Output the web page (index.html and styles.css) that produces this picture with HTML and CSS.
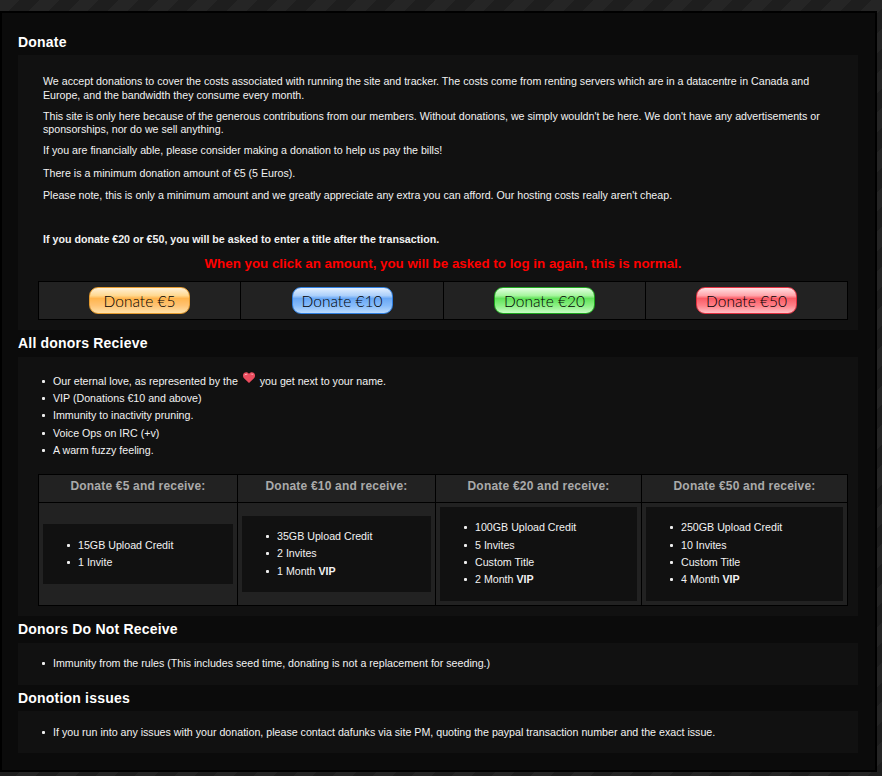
FILE: index.html
```html
<!DOCTYPE html>
<html lang="en">
<head>
<meta charset="utf-8">
<title>Donate</title>
<link rel="stylesheet" href="styles.css">
</head>
<body>
<main class="panel">
  <h2 class="heading heading-first">Donate</h2>
  <section class="box box-intro">
    <div class="intro">
      <p class="p-first">We accept donations to cover the costs associated with running the site and tracker. The costs come from renting servers which are in a datacentre in Canada and Europe, and the bandwidth they consume every month.</p>
      <p class="p-tight">This site is only here because of the generous contributions from our members. Without donations, we simply wouldn't be here. We don't have any advertisements or sponsorships, nor do we sell anything.</p>
      <p class="p-loose">If you are financially able, please consider making a donation to help us pay the bills!</p>
      <p>There is a minimum donation amount of €5 (5 Euros).</p>
      <p>Please note, this is only a minimum amount and we greatly appreciate any extra you can afford. Our hosting costs really aren't cheap.</p>
      <p class="title-note"><strong>If you donate €20 or €50, you will be asked to enter a title after the transaction.</strong></p>
    </div>
    <p class="warning">When you click an amount, you will be asked to log in again, this is normal.</p>
    <div class="buttons">
      <div class="button-cell"><a class="pill pill-orange">Donate €5</a></div>
      <div class="button-cell"><a class="pill pill-blue">Donate €10</a></div>
      <div class="button-cell"><a class="pill pill-green">Donate €20</a></div>
      <div class="button-cell"><a class="pill pill-red">Donate €50</a></div>
    </div>
  </section>

  <h2 class="heading">All donors Recieve</h2>
  <section class="box box-all">
    <ul class="list">
      <li class="li-heart">Our eternal love, as represented by the <svg class="heart" viewBox="0 0 12 11" width="12" height="11" aria-hidden="true"><path d="M6 11 1 6.200C-.4 4.800-.3 2.300 1 1 2.600-.4 4.900 0 6 1.800 7.100 0 9.400-.4 11 1c1.300 1.300 1.400 3.800 0 5.200z" fill="#ea4c5e"/><path d="M1.500 3.600C1.500 2 3.400 1.200 4.800 2.500 3.500 2.400 2.500 2.800 1.500 3.600zM7.300 2.300C8.300 1.300 10 1.500 10.500 3 9.500 2.300 8.500 2.200 7.300 2.300z" fill="#ffc4ca"/></svg> you get next to your name.</li>
      <li>VIP (Donations €10 and above)</li>
      <li>Immunity to inactivity pruning.</li>
      <li>Voice Ops on IRC (+v)</li>
      <li>A warm fuzzy feeling.</li>
    </ul>
    <table class="tiers">
      <colgroup><col class="c1"><col class="c2"><col class="c3"><col class="c4"></colgroup>
      <thead>
        <tr>
          <th>Donate €5 and receive:</th>
          <th>Donate €10 and receive:</th>
          <th>Donate €20 and receive:</th>
          <th>Donate €50 and receive:</th>
        </tr>
      </thead>
      <tbody>
        <tr>
          <td><ul class="tier-list"><li>15GB Upload Credit</li><li>1 Invite</li></ul></td>
          <td><ul class="tier-list"><li>35GB Upload Credit</li><li>2 Invites</li><li>1 Month <strong>VIP</strong></li></ul></td>
          <td><ul class="tier-list"><li>100GB Upload Credit</li><li>5 Invites</li><li>Custom Title</li><li>2 Month <strong>VIP</strong></li></ul></td>
          <td><ul class="tier-list"><li>250GB Upload Credit</li><li>10 Invites</li><li>Custom Title</li><li>4 Month <strong>VIP</strong></li></ul></td>
        </tr>
      </tbody>
    </table>
  </section>

  <h2 class="heading">Donors Do Not Receive</h2>
  <section class="box box-short">
    <ul class="list"><li>Immunity from the rules (This includes seed time, donating is not a replacement for seeding.)</li></ul>
  </section>

  <h2 class="heading heading-last">Donotion issues</h2>
  <section class="box box-short box-last">
    <ul class="list"><li>If you run into any issues with your donation, please contact dafunks via site PM, quoting the paypal transaction number and the exact issue.</li></ul>
  </section>
</main>
</body>
</html>
```
FILE: styles.css
```css
* { box-sizing: border-box; }
html, body { margin: 0; height: 776px; overflow: hidden; }
body {
  padding-top: 11px;
  background: repeating-linear-gradient(135deg, #252525 0 14px, #1e1e1e 14px 28px);
  font-family: "Liberation Sans", Arial, sans-serif;
  font-size: 10.67px;
  color: #f2f2f2;
}
.panel {
  width: 877px;
  height: 761px;
  padding: 14px 17px 0 16px;
  background: #0b0b0b;
  border: 2px solid #000;
}
.heading {
  margin: 0;
  height: 27px;
  font-size: 14px;
  line-height: 26px;
  font-weight: bold;
  color: #fff;
  letter-spacing: .2px;
}
.heading-first { height: 28px; line-height: 30px; }
.heading-last { height: 26px; line-height: 26px; }
.box { background: #111; }
.box-intro { height: 275px; padding: 19px 10px 0 20px; }
.box-all { height: 259px; padding: 15.5px 10px 0 20px; }
.box-short { height: 42px; padding: 12px 10px 0 20px; }
.box-last { padding-top: 13px; }
.intro { padding: 0 25px 0 5px; }
.intro p { margin: 0 0 8px; line-height: 14px; }
.intro .p-first { margin-bottom: 7.5px; }
.intro .p-tight { margin-bottom: 7.5px; line-height: 13px; }
.intro .p-loose { margin-bottom: 9px; }
.intro .title-note { margin: 30px 0 0; }
.warning {
  margin: 10px 0 0;
  text-align: center;
  font-size: 13.33px;
  line-height: 16px;
  font-weight: bold;
  color: #f00;
}
.buttons {
  display: grid;
  grid-template-columns: 201px 203px 202px 202px;
  margin-top: 9px;
  background: #222;
  border: 1px solid #000;
  height: 39px;
}
.button-cell {
  display: flex;
  align-items: center;
  justify-content: center;
  border-left: 1px solid #000;
}
.button-cell:first-child { border-left: 0; }
.pill {
  display: block;
  width: 101px;
  height: 27px;
  border-radius: 9px;
  border: 1px solid;
  text-align: center;
  font-family: Lato, sans-serif;
  font-weight: 300;
  font-size: 15.500px;
  line-height: 26px;
  color: #000;
}
.pill-orange { border-color: #e39a2f; background: linear-gradient(#fff1d6 0, #ffd890 30%, #ffb54e 42%, #ffc373 70%, #ffe1a8 100%); }
.pill-blue { border-color: #2f7fe0; background: linear-gradient(#e2efff 0, #acd0fb 30%, #6aa8f5 42%, #86bbfa 70%, #bcdcff 100%); }
.pill-green { border-color: #1ea51e; background: linear-gradient(#e2ffe0 0, #a6f59e 30%, #62e25a 42%, #8af083 70%, #c8fcc4 100%); }
.pill-red { border-color: #e03040; background: linear-gradient(#ffe0e2 0, #ffa4aa 30%, #fa5c66 42%, #ff8088 70%, #ffc0c4 100%); }
.list, .tier-list { list-style: none; }
.list li::before, .tier-list li::before {
  content: "";
  display: inline-block;
  width: 3px;
  height: 3px;
  margin-left: -11px;
  margin-right: 8px;
  border-radius: 1px;
  background: #eee;
  vertical-align: 2px;
}
.list { margin: 0; padding: 0 0 0 15px; }
.list li { line-height: 17.4px; height: 17.4px; }
.list .li-heart { margin-top: -1px; height: 18.4px; }
.heart { vertical-align: 2px; margin: 0 2px; }
.tiers {
  width: 809px;
  margin-top: 14.5px;
  table-layout: fixed;
  border-collapse: collapse;
  background: #222;
}
.c1 { width: 199px; }
.c2 { width: 198px; }
.c3 { width: 206px; }
.c4 { width: 206px; }
.tiers th, .tiers td { border: 1px solid #000; }
.tiers th {
  height: 28px;
  font-size: 12px;
  font-weight: bold;
  letter-spacing: .2px;
  color: #aaa;
  vertical-align: top;
  padding-top: 4px;
}
.tiers td { padding: 4px; height: 102px; }
.tier-list {
  margin: 0;
  padding: 12.2px 0 12.2px 35px;
  background: #111;
}
.tier-list li { line-height: 17.400px; }
```
